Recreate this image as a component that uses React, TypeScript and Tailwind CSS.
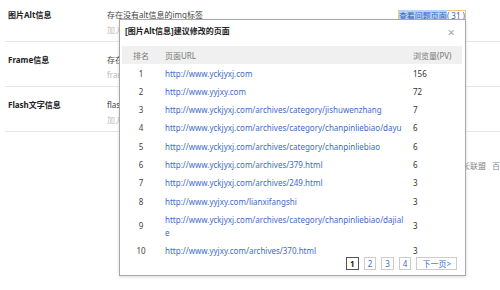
import React from "react";

const rows = [
  { rank: 1, url: "http://www.yckjyxj.com", pv: 156 },
  { rank: 2, url: "http://www.yyjxy.com", pv: 72 },
  { rank: 3, url: "http://www.yckjyxj.com/archives/category/jishuwenzhang", pv: 7 },
  { rank: 4, url: "http://www.yckjyxj.com/archives/category/chanpinliebiao/dayu", pv: 6 },
  { rank: 5, url: "http://www.yckjyxj.com/archives/category/chanpinliebiao", pv: 6 },
  { rank: 6, url: "http://www.yckjyxj.com/archives/379.html", pv: 6 },
  { rank: 7, url: "http://www.yckjyxj.com/archives/249.html", pv: 3 },
  { rank: 8, url: "http://www.yyjxy.com/lianxifangshi", pv: 3 },
  { rank: 9, url: "http://www.yckjyxj.com/archives/category/chanpinliebiao/dajiale", pv: 3 },
  { rank: 10, url: "http://www.yyjxy.com/archives/370.html", pv: 3 },
];

const checks = [
  { label: "图片Alt信息", main: "存在没有alt信息的img标签", sub: "加入alt属性描述图片内容" },
  { label: "Frame信息", main: "存在frame标签", sub: "frame不利于搜索引擎抓取" },
  { label: "Flash文字信息", main: "flash中缺少文字说明", sub: "加入文字说明" },
];

export default function App() {
  return (
    <div
      className="relative w-[500px] h-[290px] overflow-hidden bg-white text-[8px] text-[#333]"
      style={{ fontFamily: '"Noto Sans", "Noto Sans CJK SC", sans-serif' }}
    >
      {/* Check list behind the dialog */}
      <div className="-mt-[3px] ml-[5px]">
        {checks.map((c, i) => (
          <div key={c.label} className="flex h-[45px] border-b border-[#e6e6e6] pt-[10px] leading-[15px]">
            <div className="w-[102px] pl-[3px] font-bold text-[#222]">{c.label}</div>
            <div className="flex-1">
              <div className="text-[#444]">{c.main}</div>
              <div className="text-[#bbb]">{c.sub}</div>
            </div>
            {i === 0 && (
              <div className="mr-[34px] mt-[1px] self-start">
                <span className="inline-block border border-[#f3c676] leading-[10px] text-[#2f63c4]">
                  <span className="bg-[#b7d3f7]">查看问题页面</span>( 31 )
                </span>
              </div>
            )}
          </div>
        ))}
      </div>

      <div className="mt-[28px] whitespace-nowrap pl-[454px] text-[#888]">
        站长联盟<span className="ml-[6px]">百度统计</span>
      </div>

      {/* Dialog */}
      <div className="absolute left-[119px] top-[19px] w-[347px] h-[257px] border border-[#a8a8a8] bg-white px-[2px] shadow-[0_1px_3px_rgba(0,0,0,0.15)]">
        <div className="flex items-start justify-between h-[26px] pt-[5px] pl-[3px] pr-[8px] leading-[12px]">
          <span className="font-bold text-[#222]">[图片Alt信息]建议修改的页面</span>
          <span className="mt-[1px] text-[13px] leading-none text-[#aaa]">×</span>
        </div>
        <table className="w-[340px] border-collapse table-fixed leading-[13px]">
          <colgroup>
            <col className="w-[38px]" />
            <col className="w-[251px]" />
            <col />
          </colgroup>
          <thead>
            <tr className="bg-[#f0f0f0] text-[#777]">
              <th className="h-[18px] font-normal text-center">排名</th>
              <th className="font-normal text-left pl-[5px]">页面URL</th>
              <th className="font-normal text-left pl-[2px]">浏览量(PV)</th>
            </tr>
          </thead>
          <tbody>
            {rows.map((r) => (
              <tr key={r.rank}>
                <td className="py-[2.65px] text-center text-[#444]">{r.rank}</td>
                <td className="py-[2.65px] pl-[5px] pr-[6px] break-all text-[#3d6cc6]">{r.url}</td>
                <td className="py-[2.65px] pl-[2px] text-[#333]">{r.pv}</td>
              </tr>
            ))}
          </tbody>
        </table>
        <div className="absolute right-[8px] bottom-[5px] flex gap-[5px] leading-[11px]">
          <span className="border border-[#555] px-[3px] font-bold text-[#222]">1</span>
          <span className="border border-[#ccc] px-[3px] text-[#3d6cc6]">2</span>
          <span className="border border-[#ccc] px-[3px] text-[#3d6cc6]">3</span>
          <span className="border border-[#ccc] px-[3px] text-[#3d6cc6]">4</span>
          <span className="border border-[#ccc] px-[5px] text-[#3d6cc6]">下一页&gt;</span>
        </div>
      </div>
    </div>
  );
}
